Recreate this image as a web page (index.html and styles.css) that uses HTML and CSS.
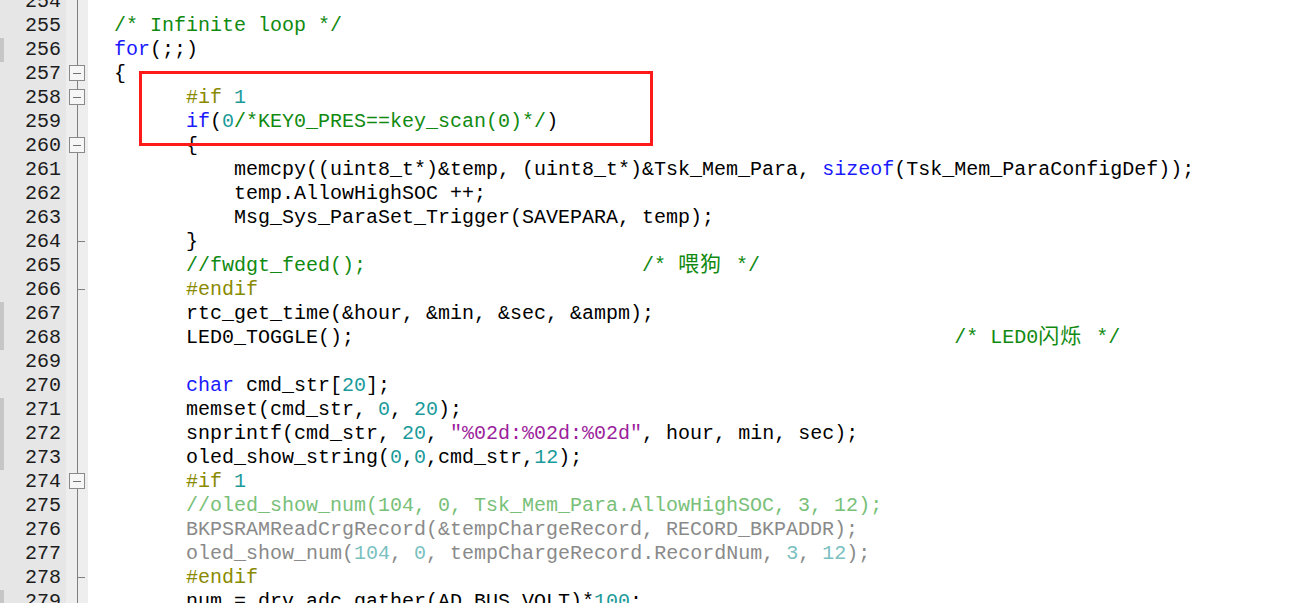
FILE: index.html
```html
<!DOCTYPE html>
<html>
<head>
<meta charset="utf-8">
<link rel="stylesheet" href="styles.css">
</head>
<body>
<div class="editor">
  <div class="lines">
    <div class="row first"><span class="mark"></span><span class="ln">254</span><span class="fold"></span><span class="code"></span></div>
    <div class="row"><span class="mark"></span><span class="ln">255</span><span class="fold"></span><span class="code"><span class="c">/* Infinite loop */</span></span></div>
    <div class="row"><span class="mark on"></span><span class="ln">256</span><span class="fold"></span><span class="code"><span class="k">for</span>(;;)</span></div>
    <div class="row"><span class="mark"></span><span class="ln">257</span><span class="fold"><span class="box"></span></span><span class="code">{</span></div>
    <div class="row"><span class="mark"></span><span class="ln">258</span><span class="fold"><span class="box"></span></span><span class="code">      <span class="p">#if</span> <span class="n">1</span></span></div>
    <div class="row"><span class="mark"></span><span class="ln">259</span><span class="fold"></span><span class="code">      <span class="k">if</span>(<span class="n">0</span><span class="c">/*KEY0_PRES==key_scan(0)*/</span>)</span></div>
    <div class="row"><span class="mark"></span><span class="ln">260</span><span class="fold"><span class="box"></span></span><span class="code">      {</span></div>
    <div class="row"><span class="mark"></span><span class="ln">261</span><span class="fold"></span><span class="code">          memcpy((uint8_t*)&amp;temp, (uint8_t*)&amp;Tsk_Mem_Para, <span class="k">sizeof</span>(Tsk_Mem_ParaConfigDef));</span></div>
    <div class="row"><span class="mark"></span><span class="ln">262</span><span class="fold"></span><span class="code">          temp.AllowHighSOC ++;</span></div>
    <div class="row"><span class="mark"></span><span class="ln">263</span><span class="fold"></span><span class="code">          Msg_Sys_ParaSet_Trigger(SAVEPARA, temp);</span></div>
    <div class="row"><span class="mark"></span><span class="ln">264</span><span class="fold"><span class="tick"></span></span><span class="code">      }</span></div>
    <div class="row"><span class="mark"></span><span class="ln">265</span><span class="fold"></span><span class="code">      <span class="c">//fwdgt_feed();                       /* <span class="cjk">喂狗</span> */</span></span></div>
    <div class="row"><span class="mark"></span><span class="ln">266</span><span class="fold"><span class="tick"></span></span><span class="code">      <span class="p">#endif</span></span></div>
    <div class="row"><span class="mark on"></span><span class="ln">267</span><span class="fold"></span><span class="code">      rtc_get_time(&amp;hour, &amp;min, &amp;sec, &amp;ampm);</span></div>
    <div class="row"><span class="mark on"></span><span class="ln">268</span><span class="fold"></span><span class="code">      LED0_TOGGLE();                                                  <span class="c">/* LED0<span class="cjk">闪烁</span> */</span></span></div>
    <div class="row"><span class="mark"></span><span class="ln">269</span><span class="fold"></span><span class="code"></span></div>
    <div class="row"><span class="mark"></span><span class="ln">270</span><span class="fold"></span><span class="code">      <span class="k">char</span> cmd_str[<span class="n">20</span>];</span></div>
    <div class="row"><span class="mark on"></span><span class="ln">271</span><span class="fold"></span><span class="code">      memset(cmd_str, <span class="n">0</span>, <span class="n">20</span>);</span></div>
    <div class="row"><span class="mark on"></span><span class="ln">272</span><span class="fold"></span><span class="code">      snprintf(cmd_str, <span class="n">20</span>, <span class="s">"%02d:%02d:%02d"</span>, hour, min, sec);</span></div>
    <div class="row"><span class="mark on"></span><span class="ln">273</span><span class="fold"></span><span class="code">      oled_show_string(<span class="n">0</span>,<span class="n">0</span>,cmd_str,<span class="n">12</span>);</span></div>
    <div class="row"><span class="mark"></span><span class="ln">274</span><span class="fold"><span class="box"></span></span><span class="code">      <span class="p">#if</span> <span class="n">1</span></span></div>
    <div class="row"><span class="mark"></span><span class="ln">275</span><span class="fold"></span><span class="code">      <span class="ic">//oled_show_num(104, 0, Tsk_Mem_Para.AllowHighSOC, 3, 12);</span></span></div>
    <div class="row"><span class="mark"></span><span class="ln">276</span><span class="fold"></span><span class="code inactive">      BKPSRAMReadCrgRecord(&amp;tempChargeRecord, RECORD_BKPADDR);</span></div>
    <div class="row"><span class="mark"></span><span class="ln">277</span><span class="fold"></span><span class="code inactive">      oled_show_num(<span class="in">104</span>, <span class="in">0</span>, tempChargeRecord.RecordNum, <span class="in">3</span>, <span class="in">12</span>);</span></div>
    <div class="row"><span class="mark"></span><span class="ln">278</span><span class="fold"><span class="tick"></span></span><span class="code">      <span class="p">#endif</span></span></div>
    <div class="row"><span class="mark on"></span><span class="ln">279</span><span class="fold"></span><span class="code">      num = drv_adc_gather(AD_BUS_VOLT)*<span class="n">100</span>;</span></div>
  </div>
  <div class="highlight"></div>
</div>
</body>
</html>
```

FILE: styles.css
```css
html, body {
  margin: 0;
  padding: 0;
  background: #ffffff;
  overflow: hidden;
}

.editor {
  position: relative;
  width: 1290px;
  height: 603px;
  overflow: hidden;
  font-family: "Liberation Mono", "Courier New", monospace;
  font-size: 20px;
  color: #000000;
}

.lines {
  display: flex;
  flex-direction: column;
  margin-top: -10px;
}

.row {
  display: flex;
  height: 24px;
  line-height: 24px;
}

.mark {
  width: 4px;
  flex: 0 0 4px;
  background: #e6e6e6;
}

.mark.on {
  background: #c6c6c6;
}

.ln {
  width: 62px;
  flex: 0 0 62px;
  box-sizing: border-box;
  padding-right: 5px;
  text-align: right;
  background: #e6e6e6;
  color: #1c1c1c;
}

.fold {
  position: relative;
  width: 22px;
  flex: 0 0 22px;
  background: linear-gradient(to right, #eeeeee 0, #eeeeee 11px, #808080 11px, #808080 12px, #eeeeee 12px, #eeeeee 100%);
}

.box {
  position: absolute;
  left: 3px;
  top: 3px;
  width: 14px;
  height: 14px;
  border: 1px solid #8a8a8a;
  background: #f6f6f6;
}

.box::after {
  content: "";
  position: absolute;
  left: 3px;
  right: 3px;
  top: 7px;
  height: 1px;
  background: #707070;
}

.tick {
  position: absolute;
  left: 11px;
  top: 11px;
  width: 8px;
  height: 1px;
  background: #808080;
}

.code {
  flex: 1;
  padding-left: 26px;
  white-space: pre;
  background: #ffffff;
}

.c { color: #118a11; }
.k { color: #1a1aff; }
.p { color: #8a8a00; }
.n { color: #1a9a9a; }
.s { color: #9c1f9c; }
.ic { color: #78c078; }
.inactive { color: #8a8a8a; }
.in { color: #7ac0c0; }

.cjk {
  font-family: "Noto Sans CJK SC", sans-serif;
  font-size: 21px;
  letter-spacing: 1px;
  line-height: 0;
  padding-right: 2px;
}

.highlight {
  position: absolute;
  left: 139px;
  top: 71px;
  width: 514px;
  height: 75px;
  box-sizing: border-box;
  border: 3px solid #ff1a1a;
}
```
